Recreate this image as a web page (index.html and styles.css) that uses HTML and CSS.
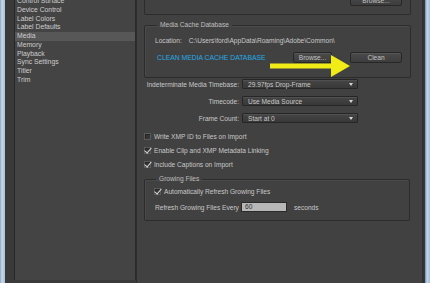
FILE: index.html
```html
<!DOCTYPE html>
<html lang="en">
<head>
  <meta charset="UTF-8">
  <title>Preferences - Media</title>
  <link rel="stylesheet" href="styles.css">
</head>
<body>
  <div class="frame-left"></div>

  <aside class="side">
    <ul class="cat-list">
      <li>Control Surface</li>
      <li>Device Control</li>
      <li>Label Colors</li>
      <li>Label Defaults</li>
      <li class="selected">Media</li>
      <li>Memory</li>
      <li>Playback</li>
      <li>Sync Settings</li>
      <li>Titler</li>
      <li>Trim</li>
    </ul>
  </aside>

  <main class="main">
    <div class="group-top">
      <button class="btn btn-browse-top">Browse...</button>
    </div>

    <fieldset class="group group-cache">
      <legend>Media Cache Database</legend>
      <div class="loc-row">
        <span>Location:</span>
        <span class="path">C:\Users\ford\AppData\Roaming\Adobe\Common\</span>
      </div>
      <div class="action-row">
        <span class="callout">CLEAN MEDIA CACHE DATABASE</span>
        <button class="btn btn-browse">Browse...</button>
        <button class="btn btn-clean">Clean</button>
      </div>
      <!-- annotation arrow drawn over the buttons -->
      <svg class="arrow" width="82" height="23" viewBox="0 0 82 23">
        <rect x="0" y="8.5" width="64" height="5" fill="#f1ec17"/>
        <polygon points="61,0 80,11 61,22" fill="#f1ec17"/>
      </svg>
    </fieldset>

    <div class="select-grid">
      <label>Indeterminate Media Timebase:</label>
      <div class="select"><span>29.97fps Drop-Frame</span><i class="caret"></i></div>
      <label>Timecode:</label>
      <div class="select"><span>Use Media Source</span><i class="caret"></i></div>
      <label>Frame Count:</label>
      <div class="select"><span>Start at 0</span><i class="caret"></i></div>
    </div>

    <div class="checks">
      <div class="check-row"><span class="box"></span>Write XMP ID to Files on Import</div>
      <div class="check-row"><span class="box checked"></span>Enable Clip and XMP Metadata Linking</div>
      <div class="check-row"><span class="box checked"></span>Include Captions on Import</div>
    </div>

    <fieldset class="group group-growing">
      <legend>Growing Files</legend>
      <div class="check-row"><span class="box checked"></span>Automatically Refresh Growing Files</div>
      <div class="refresh-row">
        <span class="refresh-label">Refresh Growing Files Every</span>
        <span class="num-input">60</span>
        <span class="unit">seconds</span>
      </div>
    </fieldset>
  </main>

  <div class="frame-right"></div>
</body>
</html>
```

FILE: styles.css
```css
/* Base */
* {
  margin: 0;
  padding: 0;
  box-sizing: border-box;
}

body {
  width: 430px;
  height: 283px;
  overflow: hidden;
  display: flex;
  background: #414141;
  font-family: "Liberation Sans", Arial, sans-serif;
  font-size: 6.6px;
  color: #c8c8c8;
  white-space: nowrap;
}

/* Window frame */
.frame-left {
  width: 5px;
  background: linear-gradient(to right, #8aa5c6, #c8d8ea 40%, #a9bfd8);
}

.frame-right {
  width: 8px;
  background: linear-gradient(to right, #2c2c2c 0, #383838 3px, #6f88a6 3px, #c2d4e8 5px, #a7bdd6);
}

/* Category list */
.side {
  width: 132px;
  padding-left: 9px;
  background: #3a3a3a;
  border-right: 1px solid #2d2d2d;
  overflow: hidden;
}

.cat-list {
  list-style: none;
  height: 100%;
  background: #444;
  border-left: 1px solid #262626;
  border-right: 1px solid #2a2a2a;
  margin-top: -3px;
}

.cat-list li {
  height: 8.75px;
  line-height: 8.75px;
  padding-left: 2px;
  font-size: 6.8px;
  color: #cdcdcd;
}

.cat-list li.selected {
  background: #575757;
}

/* Main panel */
.main {
  flex: 1;
  padding: 0 11px 0 7px;
  display: flex;
  flex-direction: column;
  overflow: hidden;
}

.group-top {
  margin-top: -10px;
  height: 25px;
  border: 1px solid #2c2c2c;
  border-top: none;
  border-radius: 0 0 2px 2px;
  display: flex;
  justify-content: flex-end;
  align-items: flex-end;
  padding: 0 8px 8px 0;
}

.group {
  border: 1px solid #2c2c2c;
  border-radius: 2px;
  box-shadow: inset 1px 1px 0 #4a4a4a;
}

.group legend {
  line-height: 8px;
  padding: 0 3px;
  margin-left: 2px;
  color: #bebebe;
}

/* Buttons */
.btn {
  font-family: inherit;
  font-size: 6.6px;
  color: #c4c4c4;
  height: 11px;
  line-height: 9px;
  background: linear-gradient(#4b4b4b, #3d3d3d);
  border: 1px solid #272727;
  border-radius: 2px;
  box-shadow: inset 0 1px 0 #575757;
}

.btn-browse-top {
  width: 52px;
  height: 12px;
}

/* Media cache group */
.group-cache {
  position: relative;
  margin-top: 6px;
  padding: 7px 8px 14px 10px;
}

.loc-row {
  display: flex;
  gap: 7px;
  height: 9px;
  line-height: 9px;
}

.action-row {
  display: flex;
  align-items: center;
  margin-top: 7px;
  height: 11px;
}

.callout {
  margin-left: 2px;
  font-size: 6.8px;
  color: #22abe8;
}

.btn-browse {
  margin-left: auto;
  width: 39px;
}

.btn-clean {
  margin-left: 18px;
  width: 52px;
}

.arrow {
  position: absolute;
  left: 125px;
  top: 26px;
}

/* Dropdowns */
.select-grid {
  display: grid;
  grid-template-columns: 95px 116px;
  column-gap: 3px;
  row-gap: 7px;
  align-items: center;
  margin-top: 1px;
}

.select-grid label {
  justify-self: end;
}

.select {
  height: 10px;
  display: flex;
  align-items: center;
  justify-content: space-between;
  padding: 0 4px 0 5px;
  background: linear-gradient(#454545, #383838);
  border: 1px solid #262626;
  border-radius: 1px;
  box-shadow: inset 0 1px 0 #505050;
  color: #cacaca;
}

.caret {
  width: 0;
  height: 0;
  border-left: 2.5px solid transparent;
  border-right: 2.5px solid transparent;
  border-top: 3px solid #d6d6d6;
}

/* Checkboxes */
.checks {
  display: flex;
  flex-direction: column;
  gap: 4px;
  margin-top: 8px;
}

.check-row {
  display: flex;
  align-items: center;
  gap: 3px;
  height: 10px;
}

.box {
  position: relative;
  width: 7px;
  height: 7px;
  background: #353535;
  border: 1px solid #5a5a5a;
  box-shadow: inset 1px 1px 0 #262626;
}

.box.checked::after {
  content: "";
  position: absolute;
  left: 1px;
  top: -2px;
  width: 2.5px;
  height: 6px;
  border-right: 1.2px solid #d2d2d2;
  border-bottom: 1.2px solid #d2d2d2;
  transform: rotate(40deg);
}

/* Growing files group */
.group-growing {
  margin-top: 6px;
  margin-right: 1px;
  padding: 3px 8px 8px 9px;
}

.refresh-row {
  display: flex;
  align-items: center;
  margin-top: 6px;
  height: 10px;
}

.refresh-label {
  flex: none;
  width: 87px;
  padding-left: 1px;
}

.num-input {
  width: 46px;
  height: 10px;
  line-height: 8px;
  padding-left: 3px;
  background: #b7b7b7;
  border: 1px solid #2a2a2a;
  color: #2e2e2e;
}

.unit {
  margin-left: 7px;
}
```
